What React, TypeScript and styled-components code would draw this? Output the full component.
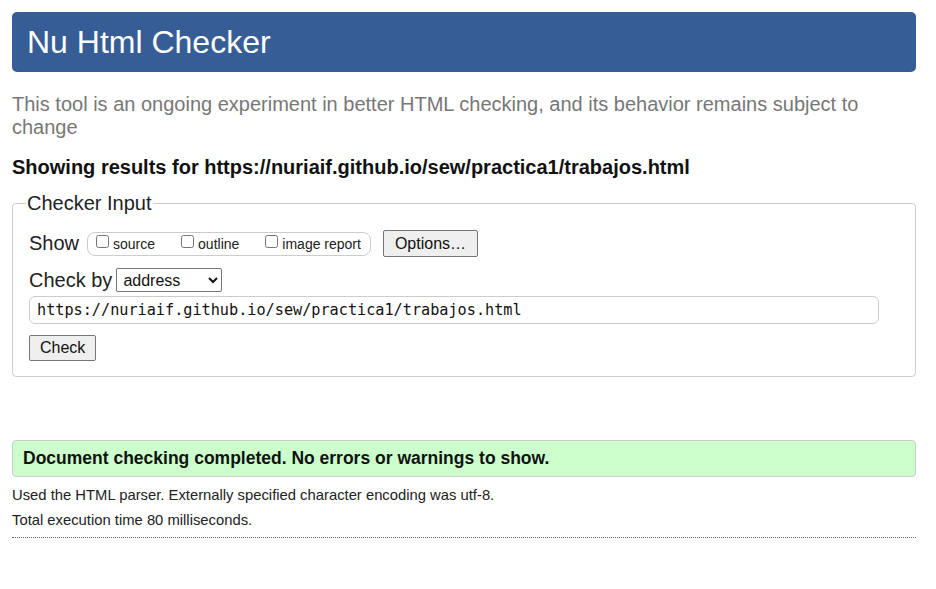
import React from "react";
import styled, { createGlobalStyle } from "styled-components";

const Global = createGlobalStyle`
  html, body { margin: 0; padding: 0; background: #fff; }
  body { font-family: "Liberation Sans", Arial, sans-serif; color: #111; }
`;

const Page = styled.div`
  padding: 12px 20px 40px 12px;
  display: flex;
  flex-direction: column;
`;

const Header = styled.h1`
  margin: 0;
  height: 60px;
  box-sizing: border-box;
  background: #365d95;
  color: #fff;
  border-radius: 5px;
  font-weight: normal;
  font-size: 32px;
  line-height: 60px;
  padding: 0 15px;
`;

const Intro = styled.p`
  margin: 21px 0 0;
  color: #777;
  font-size: 20px;
  line-height: 23px;
`;

const Showing = styled.p`
  margin: 16px 0 0;
  font-size: 20px;
  font-weight: bold;
  line-height: 24px;
  color: #111;
`;

const Fieldset = styled.fieldset`
  margin: 13px 0 0;
  border: 1px solid #ccc;
  border-radius: 4px;
  padding: 6px 36px 15px 16px;
  display: flex;
  flex-direction: column;
`;

const Legend = styled.legend`
  font-size: 20px;
  line-height: 23px;
  padding: 0 1px;
  margin-left: -3px;
  color: #222;
`;

const Row = styled.div<{ $mt?: number }>`
  display: flex;
  align-items: center;
  gap: 4px;
  margin-top: ${(p) => p.$mt ?? 0}px;
`;

const RowLabel = styled.span`
  font-size: 20px;
  color: #222;
`;

const ShowBox = styled.span`
  display: inline-flex;
  align-items: center;
  gap: 23px;
  border: 1px solid #ccc;
  border-radius: 8px;
  height: 24px;
  box-sizing: border-box;
  padding: 0 9px 0 5px;
  margin-left: 4px;
`;

const CheckLabel = styled.label`
  display: inline-flex;
  align-items: center;
  font-size: 14px;
  color: #222;
`;

const Box = styled.input`
  width: 13px;
  height: 13px;
  margin: 0 4px 5px 3px;
`;

const Button = styled.button<{ $h?: number; $px?: number }>`
  font-family: "Liberation Sans", Arial, sans-serif;
  font-size: 16px;
  color: #111;
  background: #efefef;
  border: 1px solid #767676;
  border-radius: 2px;
  height: ${(p) => p.$h ?? 26}px;
  padding: 0 ${(p) => p.$px ?? 10}px;
`;

const Spacer = styled.span`
  width: 4px;
`;

const Select = styled.select`
  font-family: "Liberation Sans", Arial, sans-serif;
  font-size: 16px;
  color: #111;
  width: 106px;
  height: 24px;
  border: 1px solid #767676;
  border-radius: 2px;
  background: #fff;
  padding: 0 2px;
`;

const UrlInput = styled.input`
  margin-top: 4px;
  height: 28px;
  box-sizing: border-box;
  border: 1px solid #ccc;
  border-radius: 6px;
  padding: 0 7px;
  font-family: "DejaVu Sans Mono", "Liberation Mono", monospace;
  font-size: 15.2px;
  color: #111;
`;

const Success = styled.div`
  margin-top: 63px;
  height: 37px;
  box-sizing: border-box;
  background: #ccffcc;
  border: 1px solid #ccc;
  border-radius: 4px;
  padding: 0 10px;
  display: flex;
  align-items: center;
  font-weight: bold;
  font-size: 17.5px;
  color: #111;
`;

const Note = styled.p<{ $mt?: number }>`
  margin: ${(p) => p.$mt ?? 0}px 0 0;
  font-size: 14.8px;
  line-height: 25px;
  color: #222;
`;

const Rule = styled.hr`
  margin: 4px 0 0;
  border: none;
  border-top: 1px dotted #666;
  height: 0;
`;

export default function App() {
  return (
    <>
      <Global />
      <Page>
        <Header>Nu Html Checker</Header>
        <Intro>
          This tool is an ongoing experiment in better HTML checking, and its behavior remains subject to
          change
        </Intro>
        <Showing>Showing results for https://nuriaif.github.io/sew/practica1/trabajos.html</Showing>
        <Fieldset>
          <Legend>Checker Input</Legend>
          <Row $mt={9}>
            <RowLabel>Show</RowLabel>
            <ShowBox>
              <CheckLabel>
                <Box type="checkbox" />source
              </CheckLabel>
              <CheckLabel>
                <Box type="checkbox" />outline
              </CheckLabel>
              <CheckLabel>
                <Box type="checkbox" />image report
              </CheckLabel>
            </ShowBox>
            <Spacer />
            <Button $h={27} $px={11}>Options…</Button>
          </Row>
          <Row $mt={11}>
            <RowLabel>Check by</RowLabel>
            <Select defaultValue="address">
              <option value="address">address</option>
              <option value="file">file upload</option>
              <option value="text">text input</option>
            </Select>
          </Row>
          <UrlInput defaultValue="https://nuriaif.github.io/sew/practica1/trabajos.html" />
          <Row $mt={11}>
            <Button $h={26} $px={10}>Check</Button>
          </Row>
        </Fieldset>
        <Success>Document checking completed. No errors or warnings to show.</Success>
        <Note $mt={6}>Used the HTML parser. Externally specified character encoding was utf-8.</Note>
        <Note>Total execution time 80 milliseconds.</Note>
        <Rule />
      </Page>
    </>
  );
}
